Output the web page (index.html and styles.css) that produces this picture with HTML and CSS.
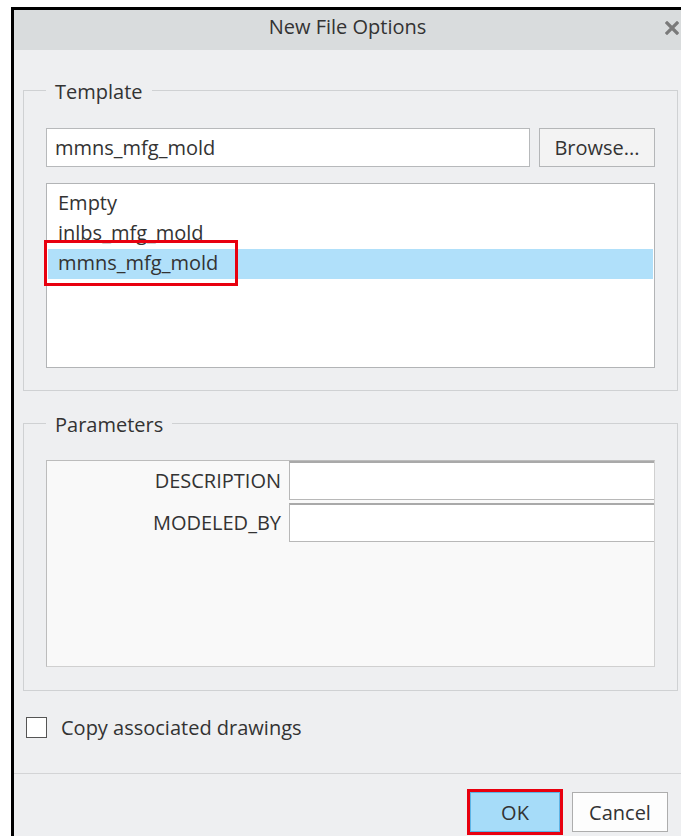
FILE: index.html
```html
<!DOCTYPE html>
<html lang="en">
<head>
<meta charset="utf-8">
<title>New File Options</title>
<link rel="stylesheet" href="styles.css">
</head>
<body>
<div class="dialog">
  <div class="titlebar">
    <span></span>
    <span class="title">New File Options</span>
    <span class="close" aria-label="Close">
      <svg width="14" height="14" viewBox="0 0 14 14"><path d="M2 2 L12 12 M12 2 L2 12" stroke="#7a7a7a" stroke-width="3.2" stroke-linecap="square"/></svg>
    </span>
  </div>

  <div class="content">
    <fieldset class="group group-template">
      <legend>Template</legend>
      <div class="picker">
        <div class="field">mmns_mfg_mold</div>
        <button class="btn btn-browse" type="button">Browse...</button>
      </div>
      <ul class="list">
        <li class="item">Empty</li>
        <li class="item">inlbs_mfg_mold</li>
        <li class="item selected">mmns_mfg_mold</li>
        <li class="mark"></li>
      </ul>
    </fieldset>

    <fieldset class="group group-params">
      <legend>Parameters</legend>
      <div class="params">
        <div class="param-name">DESCRIPTION</div>
        <div class="param-value"></div>
        <div class="param-name">MODELED_BY</div>
        <div class="param-value"></div>
      </div>
    </fieldset>

    <label class="check">
      <span class="box"></span>
      <span>Copy associated drawings</span>
    </label>
  </div>

  <div class="footer">
    <button class="btn btn-ok" type="button">OK</button>
    <button class="btn btn-cancel" type="button">Cancel</button>
  </div>
</div>
</body>
</html>
```
FILE: styles.css
```css
html, body {
  margin: 0;
  background: #ffffff;
}

body {
  font-family: "Open Sans", Lato, sans-serif;
  font-size: 20px;
  color: #333333;
  overflow: hidden;
}

.dialog {
  box-sizing: border-box;
  margin: 7px 0 0 11px;
  height: 829px;
  border-top: 3px solid #000;
  border-left: 3px solid #000;
  background: #eeeff1;
  overflow: hidden;
}

/* window caption */
.titlebar {
  height: 40px;
  background: #d9dcdd;
  display: grid;
  grid-template-columns: 1fr auto 1fr;
  align-items: center;
  padding-bottom: 6px;
  box-sizing: border-box;
}

.title {
  font-size: 20px;
  line-height: 26px;
  color: #333;
}

.close {
  justify-self: end;
  margin-right: 2px;
  margin-top: 1px;
  display: flex;
}

.content {
  padding: 27px 3px 0 9px;
}

/* group boxes */
.group {
  margin: 0;
  border: 1px solid #cfd1d3;
  padding: 25px 22px 22px 22px;
  min-width: 0;
}

.group legend {
  padding: 4px 9px 0;
  font-size: 20px;
  line-height: 22px;
}

.group-params {
  margin-top: 19px;
  padding-top: 24px;
  padding-bottom: 23px;
}

.picker {
  display: flex;
  gap: 9px;
  height: 39px;
}

.field {
  flex: 1;
  box-sizing: border-box;
  background: #fff;
  border: 1px solid #b7b9bb;
  padding: 0 8px;
  line-height: 37px;
}

.btn {
  font-family: inherit;
  font-size: 20px;
  color: #333;
  box-sizing: border-box;
  margin: 0;
  padding: 0;
  cursor: default;
}

.btn-browse {
  width: 116px;
  background: #f3f3f3;
  border: 1px solid #b4b6b8;
}

.list {
  list-style: none;
  margin: 16px 0 0;
  padding: 5px 1px;
  height: 185px;
  box-sizing: border-box;
  background: #fff;
  border: 1px solid #b2b4b6;
  position: relative;
}

.item {
  height: 30px;
  line-height: 28px;
  padding-left: 10px;
}

.item.selected {
  background: #b0e0fa;
}

/* red highlight frame around the chosen template */
.mark {
  position: absolute;
  left: -3px;
  top: 56px;
  width: 194px;
  height: 46px;
  box-sizing: border-box;
  border: 3px solid #e8000f;
}

/* parameter table */
.params {
  height: 207px;
  box-sizing: border-box;
  background: #f9f9f9;
  border: 1px solid #bcbcbc;
  border-right-color: #d0d0d0;
  border-bottom-color: #d0d0d0;
  display: grid;
  grid-template-columns: 242px 1fr;
  grid-auto-rows: 39px;
  row-gap: 3px;
  align-content: start;
}

.param-name {
  text-align: right;
  padding-right: 8px;
  line-height: 39px;
}

.param-value {
  background: #fff;
  border: 1px solid #b8b8b8;
  border-top: 2px solid #a9a9a9;
  border-right: 0;
}

/* checkbox row */
.check {
  display: flex;
  align-items: center;
  gap: 14px;
  height: 26px;
  margin-top: 23px;
  padding-left: 3px;
}

.box {
  width: 21px;
  height: 21px;
  box-sizing: border-box;
  background: #fff;
  border: 1px solid #555;
}

/* button strip */
.footer {
  margin-top: 33px;
  border-top: 1px solid #d3d4d6;
  padding: 18px 13px 0 0;
  display: flex;
  justify-content: flex-end;
  gap: 12px;
}

.btn-ok {
  width: 90px;
  height: 40px;
  background: #a6dcf9;
  border: 1px solid #5db4e6;
  outline: 3px solid #e8000f;
}

.btn-cancel {
  width: 96px;
  height: 40px;
  background: #fdfdfd;
  border: 1px solid #adadad;
}
```
